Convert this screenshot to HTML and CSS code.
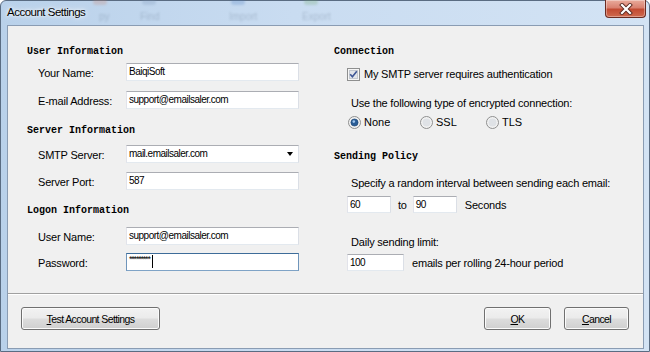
FILE: index.html
```html
<!DOCTYPE html>
<html>
<head>
<title>Account Settings</title>
<meta charset="UTF-8">
<link rel="stylesheet" href="styles.css">
</head>
<body>
<div class="window">
  <div class="titlebar">
    <div class="ghost">
      <span class="ghost-item g1">py</span>
      <span class="ghost-item g2">Find</span>
      <span class="ghost-item g3">Import</span>
      <span class="ghost-item g4">Export</span>
    </div>
    <span class="title">Account Settings</span>
    <div class="close">
      <svg width="16" height="12" viewBox="0 0 16 12">
        <path d="M4 2 L12 10 M12 2 L4 10" stroke="#5a2a22" stroke-width="4" stroke-linecap="square"/>
        <path d="M4 2 L12 10 M12 2 L4 10" stroke="#ffffff" stroke-width="2.2" stroke-linecap="square"/>
      </svg>
    </div>
  </div>

  <div class="client">
    <div class="panes">
      <div class="pane pane-left">
        <div class="group group-user">
          <div class="section-title">User Information</div>
          <div class="field">
            <span class="label">Your Name:</span>
            <div class="textbox">BaiqiSoft</div>
          </div>
          <div class="field">
            <span class="label">E-mail Address:</span>
            <div class="textbox">support@emailsaler.com</div>
          </div>
        </div>
        <div class="group group-server">
          <div class="section-title">Server Information</div>
          <div class="field">
            <span class="label">SMTP Server:</span>
            <div class="textbox combo">mail.emailsaler.com<span class="arrow"></span></div>
          </div>
          <div class="field">
            <span class="label">Server Port:</span>
            <div class="textbox">587</div>
          </div>
        </div>
        <div class="group group-logon">
          <div class="section-title">Logon Information</div>
          <div class="field">
            <span class="label">User Name:</span>
            <div class="textbox">support@emailsaler.com</div>
          </div>
          <div class="field">
            <span class="label">Password:</span>
            <div class="textbox focused"><span class="stars">*********</span><span class="caret"></span></div>
          </div>
        </div>
      </div>

      <div class="pane pane-right">
        <div class="section-title">Connection</div>
        <div class="check-row">
          <svg width="13" height="13" viewBox="0 0 13 13">
            <rect x="0.5" y="0.5" width="12" height="12" fill="#f6f6f6" stroke="#8e8f8f"/>
            <rect x="2.5" y="2.5" width="8" height="8" fill="#e2e5ea" stroke="#c3c8d0"/>
            <path d="M3.2 6.2 L5.4 8.8 L9.8 3.2" fill="none" stroke="#3f5796" stroke-width="1.6"/>
          </svg>
          <span>My SMTP server requires authentication</span>
        </div>
        <div class="note">Use the following type of encrypted connection:</div>
        <div class="radios">
          <div class="radio">
            <svg width="13" height="13" viewBox="0 0 13 13">
              <circle cx="6.5" cy="6.5" r="6" fill="#f2f2f2" stroke="#8e8f8f"/>
              <circle cx="6.5" cy="6.5" r="3.6" fill="#2a5d96" stroke="#17406e" stroke-width="0.6"/>
              <circle cx="5.8" cy="5.6" r="1.3" fill="#9fc6ee"/>
            </svg>
            <span>None</span>
          </div>
          <div class="radio">
            <svg width="13" height="13" viewBox="0 0 13 13">
              <circle cx="6.5" cy="6.5" r="6" fill="#f2f2f2" stroke="#8e8f8f"/>
              <circle cx="6.5" cy="6.5" r="4" fill="#dfe2e6"/>
            </svg>
            <span>SSL</span>
          </div>
          <div class="radio">
            <svg width="13" height="13" viewBox="0 0 13 13">
              <circle cx="6.5" cy="6.5" r="6" fill="#f2f2f2" stroke="#8e8f8f"/>
              <circle cx="6.5" cy="6.5" r="4" fill="#dfe2e6"/>
            </svg>
            <span>TLS</span>
          </div>
        </div>

        <div class="section-title policy">Sending Policy</div>
        <div class="note specify">Specify a random interval between sending each email:</div>
        <div class="interval-row">
          <div class="textbox small">60</div>
          <span class="to">to</span>
          <div class="textbox small">90</div>
          <span class="unit">Seconds</span>
        </div>
        <div class="note daily">Daily sending limit:</div>
        <div class="limit-row">
          <div class="textbox medium">100</div>
          <span class="unit">emails per rolling 24-hour period</span>
        </div>
      </div>
    </div>

    <div class="footer">
      <button class="btn btn-test"><u>T</u>est Account Settings</button>
      <button class="btn btn-ok"><u>O</u>K</button>
      <button class="btn btn-cancel"><u>C</u>ancel</button>
    </div>
  </div>
</div>
</body>
</html>
```

FILE: styles.css
```css
body {
  margin: 0;
  font-family: "Liberation Sans", Arial, sans-serif;
  font-size: 11px;
  color: #000;
  background: #fff;
}
.window {
  position: relative;
  width: 650px;
  height: 352px;
  box-sizing: border-box;
  display: flex;
  flex-direction: column;
  padding: 0 5px 2px 6px;
  border: 1px solid #5a6c82;
  border-radius: 6px 6px 0 0;
  background: linear-gradient(90deg, #b9d1ea 0%, #c9dcf1 45%, #d3e3f4 100%);
}
.titlebar {
  position: relative;
  height: 24px;
  display: flex;
  align-items: center;
  flex-shrink: 0;
}
.title {
  position: relative;
  z-index: 1;
  font-size: 11.5px;
  letter-spacing: -0.5px;
  margin-top: -3px;
  text-shadow: 0 0 6px #fff, 0 0 3px #fff;
}
.ghost {
  position: absolute;
  top: 0;
  left: 0;
  right: 0;
  bottom: 0;
  filter: blur(1.2px);
  opacity: 0.25;
}
.ghost-item {
  position: absolute;
  top: 10px;
  font-size: 10px;
  color: #4e6076;
}
.ghost-item::before {
  content: "";
  position: absolute;
  top: -12px;
  left: 2px;
  width: 14px;
  height: 6px;
  border-radius: 3px;
  background: #7a93b6;
}
.g1 { left: 92px; }
.g1::before { background: #c9826e; left: -6px; }
.g2 { left: 133px; }
.g3 { left: 222px; }
.g3::before { background: #4b7cc0; }
.g4 { left: 295px; }
.g4::before { background: #6ea66a; }
.close {
  position: relative;
  z-index: 1;
  margin-left: auto;
  margin-right: -2px;
  align-self: flex-start;
  width: 41px;
  height: 18px;
  margin-top: -1px;
  box-sizing: border-box;
  display: flex;
  align-items: center;
  justify-content: center;
  border: 1px solid #6b2b21;
  border-top: none;
  border-radius: 0 0 4px 4px;
  background: linear-gradient(#e9ab9c 0%, #d98170 45%, #c24b33 55%, #cf6a4e 100%);
  box-shadow: inset 0 0 0 1px rgba(255, 255, 255, 0.35);
}
.client {
  flex: 1;
  display: flex;
  flex-direction: column;
  background: #f0f0f0;
  border: 1px solid #8a9cb3;
}
.panes {
  height: 267px;
  display: flex;
}
.pane-left {
  width: 307px;
  padding: 17px 0 0 19px;
}
.pane-right {
  flex: 1;
  display: flex;
  flex-direction: column;
  align-items: flex-start;
  padding-top: 17px;
}
.section-title {
  height: 14px;
  line-height: 17px;
  font-family: "Liberation Mono", "Courier New", monospace;
  font-weight: bold;
  font-size: 10px;
}
.group {
  display: flex;
  flex-direction: column;
}
.group-user .section-title { margin-bottom: 6px; }
.group-user .field + .field { margin-top: 10px; }
.group-server { margin-top: 13px; }
.group-server .section-title { margin-bottom: 9px; }
.group-server .field + .field { margin-top: 9px; }
.group-logon { margin-top: 12px; }
.group-logon .section-title { margin-bottom: 11px; }
.group-logon .field + .field { margin-top: 8px; }
.field {
  display: flex;
  align-items: center;
  height: 18px;
  padding-left: 11px;
}
.label {
  width: 88px;
  letter-spacing: -0.2px;
  padding-top: 2px;
}
.textbox {
  position: relative;
  box-sizing: border-box;
  width: 173px;
  height: 18px;
  line-height: 16px;
  padding-left: 2px;
  background: #fff;
  border: 1px solid;
  border-color: #abadb3 #dbdfe6 #e3e9ef #e2e3ea;
  font-size: 10px;
  letter-spacing: -0.5px;
  white-space: nowrap;
}
.combo .arrow {
  position: absolute;
  right: 5px;
  top: 6px;
  border-left: 3.5px solid transparent;
  border-right: 3.5px solid transparent;
  border-top: 4px solid #000;
}
.focused {
  border-color: #3d6c99 #6f95bb #7fa3c6 #6f95bb;
  display: flex;
  align-items: flex-start;
}
.stars {
  font-size: 9px;
  line-height: 10px;
  letter-spacing: -1.2px;
}
.caret {
  width: 1px;
  height: 13px;
  margin-top: 1px;
  margin-left: 2px;
  background: #000;
}
.check-row {
  display: flex;
  align-items: center;
  gap: 4px;
  height: 14px;
  margin-top: 10px;
  padding-left: 13px;
  letter-spacing: -0.2px;
}
.note {
  height: 14px;
  line-height: 14px;
  margin-top: 15px;
  padding-left: 17px;
  letter-spacing: -0.2px;
}
.radios {
  display: grid;
  grid-template-columns: 72px 66px auto;
  height: 14px;
  margin-top: 5px;
  padding-left: 14px;
}
.radio {
  display: flex;
  align-items: center;
  gap: 3px;
}
.section-title.policy { margin-top: 19px; }
.note.specify { margin-top: 14px; }
.interval-row, .limit-row {
  display: flex;
  align-items: center;
  padding-left: 13px;
  letter-spacing: -0.2px;
}
.interval-row { margin-top: 6px; }
.textbox.small { width: 44px; height: 17px; }
.textbox.medium { width: 57px; height: 17px; }
.to { margin: 0 6px 0 7px; }
.unit { margin-left: 8px; }
.note.daily { margin-top: 22px; }
.limit-row { margin-top: 5px; }
.footer {
  flex: 1;
  display: flex;
  align-items: flex-start;
  padding: 13px 14px 0 13px;
  border-top: 1px solid #a0a0a0;
  box-shadow: inset 0 1px 0 #fff;
}
.btn {
  height: 23px;
  box-sizing: border-box;
  padding: 0;
  border: 1px solid #707070;
  border-radius: 3px;
  background: linear-gradient(#f2f2f2 0%, #ebebeb 48%, #dddddd 52%, #cfcfcf 100%);
  box-shadow: inset 0 0 0 1px #fbfbfb;
  font-family: "Liberation Sans", Arial, sans-serif;
  font-size: 10.5px;
  letter-spacing: -0.6px;
  color: #000;
}
.btn-test { width: 139px; }
.btn-ok { width: 67px; margin-left: auto; }
.btn-cancel { width: 65px; margin-left: 13px; }
```
